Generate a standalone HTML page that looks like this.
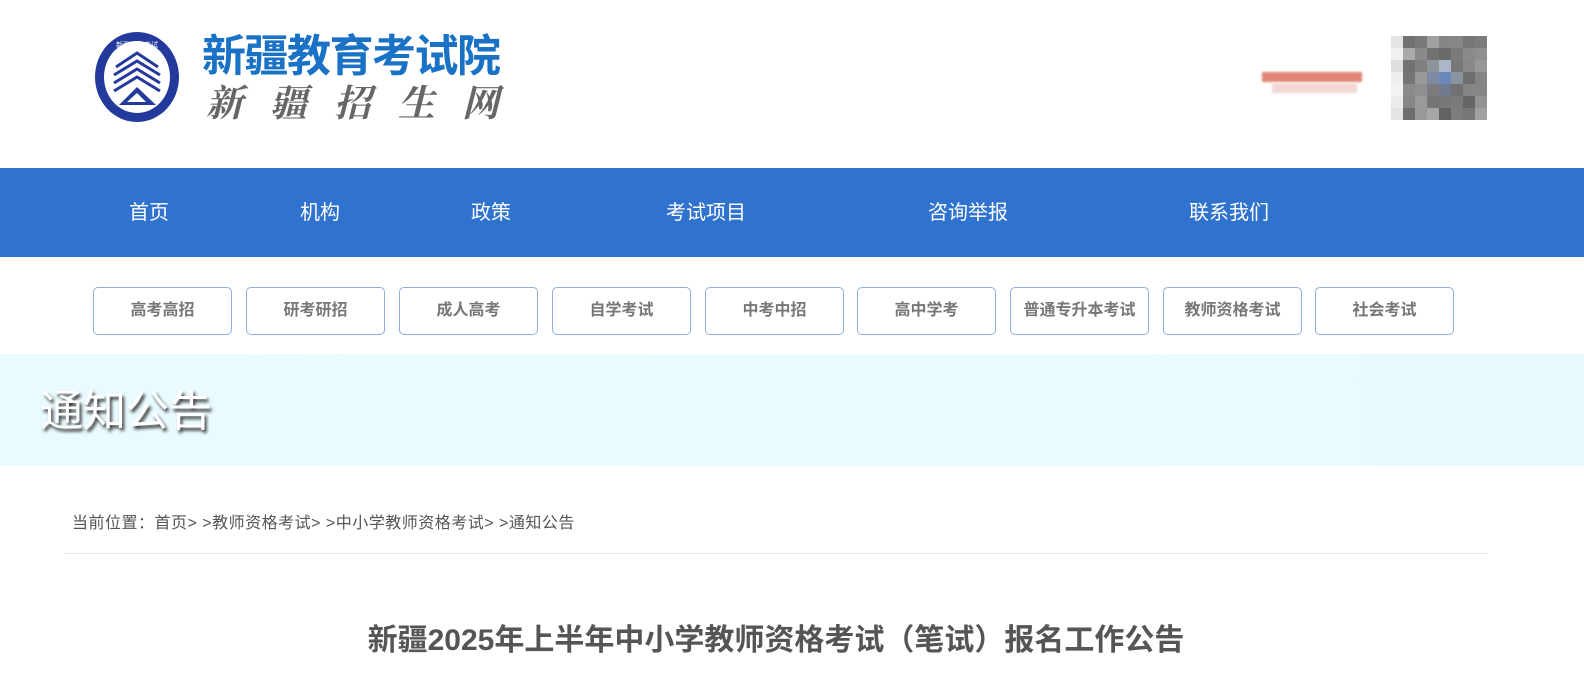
<!DOCTYPE html>
<html><head><meta charset="utf-8"><style>
*{margin:0;padding:0;box-sizing:border-box}
body{width:1584px;height:673px;overflow:hidden;background:#fff;font-family:"Liberation Sans","Noto Sans CJK SC",sans-serif;position:relative}
.abs{position:absolute}
.nav{top:168px;left:0;width:1584px;height:89px;background:#3073cf}
.nav span{position:absolute;top:33px;color:#fff;font-size:20px;line-height:24px;transform:translateX(-50%)}
.btn{position:absolute;top:287px;width:139px;height:48px;border:1px solid #8fb0de;border-radius:5px;text-align:center;line-height:46px;font-size:16px;font-weight:bold;color:#777}
.grid{left:1391px;top:36px;display:grid;grid-template-columns:repeat(8,12px);grid-template-rows:repeat(7,12px)}
</style></head><body>
<svg class="abs" style="left:94px;top:31px" width="86" height="92" viewBox="0 0 86 92">
<ellipse cx="43" cy="46" rx="42" ry="45" fill="#24399c"/>
<ellipse cx="43" cy="46" rx="33" ry="36" fill="#fff"/>
<g stroke="#24399c" stroke-width="3" fill="none">
<path d="M22 36 L43 22 L64 36"/><path d="M20 44 L43 30 L66 44"/><path d="M20 52 L43 38 L66 52"/><path d="M20 60 L43 46 L66 60"/>
</g>
<path d="M25 74 L43 56 L62 74 Z" fill="#24399c"/><path d="M33 71 L43 62 L52 71Z" fill="#fff"/>
<text x="43" y="16" font-size="7" fill="#fff" text-anchor="middle" font-family="Noto Sans CJK SC">新疆教育考试</text>
</svg>
<div class="abs" style="left:202px;top:27px;font-size:44px;font-weight:bold;color:#1a72c6;line-height:50px;letter-spacing:-1.5px;font-family:'Noto Sans CJK SC',sans-serif">新疆教育考试院</div>
<div class="abs" style="left:206px;top:78px;font-size:37px;color:#666;line-height:44px;letter-spacing:27px;font-family:'Noto Serif CJK SC',serif;font-weight:bold;font-style:italic">新疆招生网</div>
<div class="abs" style="left:1262px;top:72px;width:100px;height:10px;background:#e08575;filter:blur(1px)"></div>
<div class="abs" style="left:1272px;top:83px;width:85px;height:10px;background:#f3d8d6;filter:blur(1px)"></div>
<div class="abs grid">
<i style="background:#e4e4e4"></i><i style="background:#717171"></i><i style="background:#7a7a7a"></i><i style="background:#a0a0a0"></i><i style="background:#858585"></i><i style="background:#868686"></i><i style="background:#777"></i><i style="background:#7c7c7c"></i>
<i style="background:#f0f0f0"></i><i style="background:#aaa"></i><i style="background:#8a8a8a"></i><i style="background:#727272"></i><i style="background:#6a6a6a"></i><i style="background:#7a7a7a"></i><i style="background:#8a8a8a"></i><i style="background:#8e8e8e"></i>
<i style="background:#dedede"></i><i style="background:#717171"></i><i style="background:#808080"></i><i style="background:#8f949a"></i><i style="background:#a9b7c9"></i><i style="background:#777"></i><i style="background:#888"></i><i style="background:#989898"></i>
<i style="background:#efefef"></i><i style="background:#757575"></i><i style="background:#999"></i><i style="background:#7d8aa3"></i><i style="background:#6a88b8"></i><i style="background:#8994a0"></i><i style="background:#6e6e6e"></i><i style="background:#858585"></i>
<i style="background:#f2f2f2"></i><i style="background:#8a8a8a"></i><i style="background:#8f8f8f"></i><i style="background:#7b7b7f"></i><i style="background:#707a8f"></i><i style="background:#717171"></i><i style="background:#858585"></i><i style="background:#868686"></i>
<i style="background:#ececec"></i><i style="background:#868686"></i><i style="background:#9a9a9a"></i><i style="background:#757575"></i><i style="background:#787878"></i><i style="background:#7a7a7a"></i><i style="background:#666"></i><i style="background:#939393"></i>
<i style="background:#e4e4e4"></i><i style="background:#6e6e6e"></i><i style="background:#999"></i><i style="background:#a6a6a6"></i><i style="background:#626262"></i><i style="background:#7d7d7d"></i><i style="background:#777"></i><i style="background:#a1a1a1"></i>
</div>
<div class="abs nav">
<span style="left:149px">首页</span><span style="left:320px">机构</span><span style="left:491px">政策</span><span style="left:706px">考试项目</span><span style="left:968px">咨询举报</span><span style="left:1229px">联系我们</span>
</div>
<div class="btn" style="left:93px">高考高招</div>
<div class="btn" style="left:246px">研考研招</div>
<div class="btn" style="left:399px">成人高考</div>
<div class="btn" style="left:552px">自学考试</div>
<div class="btn" style="left:705px">中考中招</div>
<div class="btn" style="left:857px">高中学考</div>
<div class="btn" style="left:1010px">普通专升本考试</div>
<div class="btn" style="left:1163px">教师资格考试</div>
<div class="btn" style="left:1315px">社会考试</div>
<div class="abs" style="left:0;top:354px;width:1584px;height:112px;background:linear-gradient(90deg,#e9fbfe,#eafcff 60%,#e8fafe)"></div>
<div class="abs" style="left:40px;top:386px;font-size:43px;line-height:52px;color:#fff;text-shadow:2px 3px 3px #333">通知公告</div>
<div class="abs" style="left:72px;top:513px;font-size:16px;color:#555;line-height:22px;letter-spacing:0.5px">当前位置：首页&gt; &gt;教师资格考试&gt; &gt;中小学教师资格考试&gt; &gt;通知公告</div>
<div class="abs" style="left:64px;top:553px;width:1424px;height:1px;background:#e8e8e8"></div>
<div class="abs" style="left:0;top:620px;width:1552px;text-align:center;font-size:30px;font-weight:bold;color:#555;line-height:42px">新疆2025年上半年中小学教师资格考试（笔试）报名工作公告</div>
</body></html>
